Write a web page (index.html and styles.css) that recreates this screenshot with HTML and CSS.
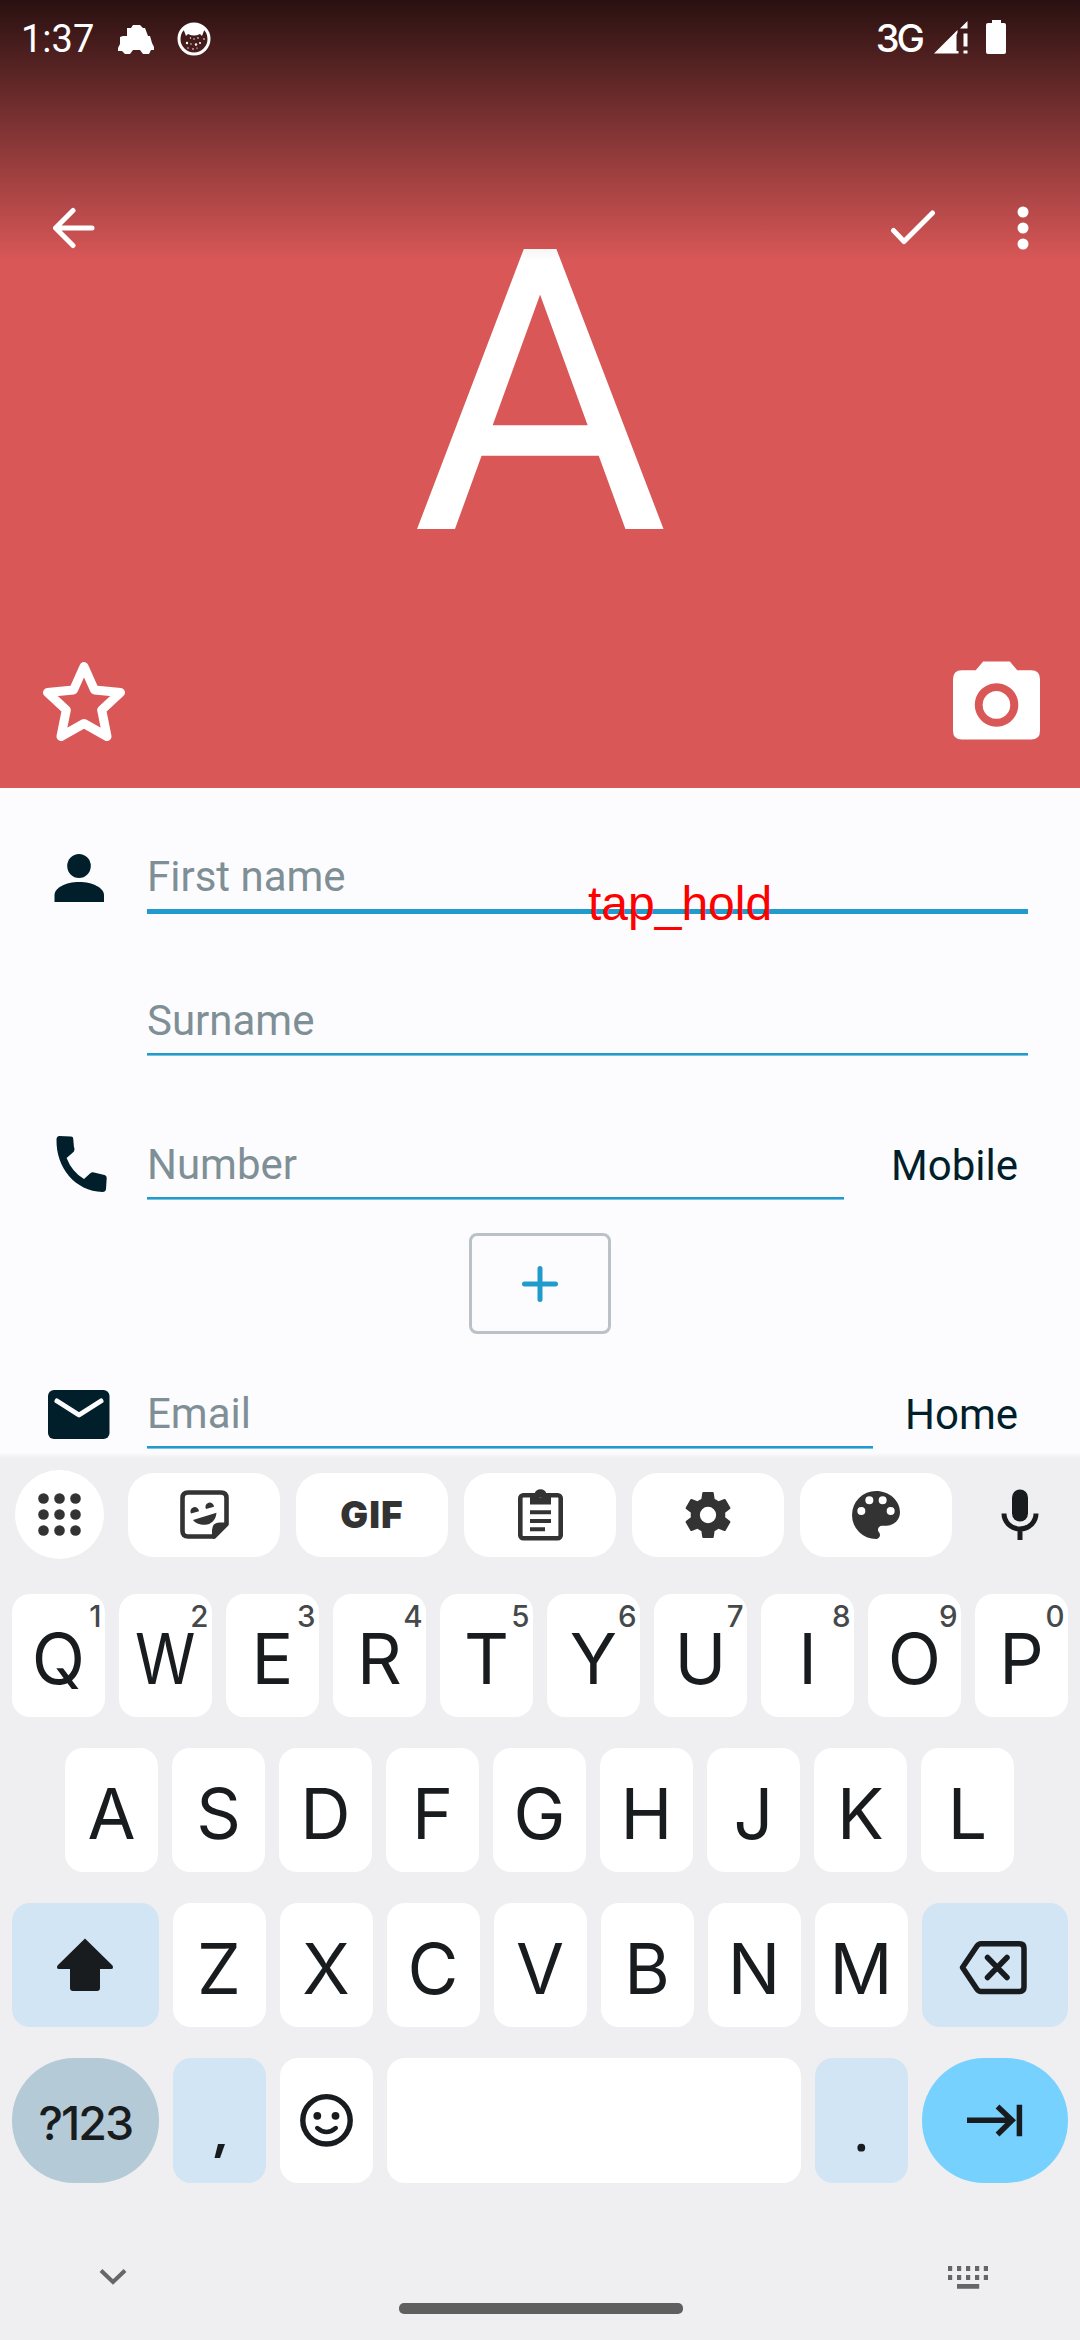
FILE: index.html
```html
<!DOCTYPE html>
<html lang="en">
<head>
<meta charset="utf-8">
<title>New contact</title>
<link rel="stylesheet" href="styles.css">
</head>
<body>
<div class="screen">
  <header class="header">
    <div class="initial">A</div>
    <div class="chrome">
      <div class="status">
        <span class="clock">1:37</span>
        <svg class="car" width="38" height="32" viewBox="0 0 38 32"><path d="M9 5h4l2-3h7l3 3h2l3 8h2l2 7 2 4v3h-3l-2 4h-6l-3-4H15l-3 4H7l-3-3H0v-3l2-4V14l3-1h4z"/></svg>
        <svg class="cat" width="36" height="36" viewBox="0 0 36 36"><circle cx="18" cy="18" r="15" fill="none" stroke="#fff" stroke-width="3"/><path d="M7 7q11-7 22 0l-3 8-2-2q-6 3-12 0l-2 2z"/><g><circle cx="11" cy="22" r="1.200"/><circle cx="20" cy="23.500" r="1.200"/><circle cx="24" cy="22" r="1"/><circle cx="14.500" cy="17" r=".7"/><circle cx="18" cy="18" r=".7"/><circle cx="22" cy="17" r=".8"/><circle cx="15" cy="23" r=".7"/><circle cx="12" cy="27" r=".7"/><circle cx="17" cy="28" r=".8"/><circle cx="21" cy="27" r=".6"/><circle cx="28" cy="18" r=".8"/></g></svg>
        <span class="network">3G</span>
        <svg class="signal" width="34" height="34" viewBox="0 0 34 34"><path d="M0 33.500 23.500 10v2.500l-1 2.500v16h2v2.500zM26 8.500 33.500 1v7.500zM29.500 13.500h4v13h-4zM29.500 30.500h4v3h-4z"/></svg>
        <svg class="battery" width="20" height="34" viewBox="0 0 20 34"><path d="M6 0h9v3h3q2 0 2 2v27q0 2-2 2H2q-2 0-2-2V5q0-2 2-2h4z"/></svg>
      </div>
      <div class="appbar">
        <svg width="42" height="42" viewBox="0 0 42 42"><path class="line" d="M39 21H3M20 3.500 2.500 21 20 38.500"/></svg>
        <svg class="check" width="46" height="42" viewBox="0 0 46 42"><path class="line" d="M3.500 23.500 14 34.500 42.500 6"/></svg>
        <svg class="dots" width="12" height="44" viewBox="0 0 12 44"><circle cx="6" cy="6" r="5.500"/><circle cx="6" cy="22" r="5.500"/><circle cx="6" cy="38" r="5.500"/></svg>
      </div>
      <div class="photo-actions">
        <svg width="82" height="82" viewBox="0 0 82 82"><path fill="none" stroke="#fff" stroke-width="9" stroke-linejoin="round" d="M41 7.500 51.500 31l26 2.500L58.700 51l5.300 26.500L41 64.500l-23 13L23.300 51 4.500 33.500l26-2.500z"/></svg>
        <svg width="87" height="80" viewBox="0 0 88 80"><path fill-rule="evenodd" d="M30.500 0h27l7.500 9h14q9 0 9 9v52q0 9-9 9H9q-9 0-9-9V18q0-9 9-9h14zM44 22a22 22 0 1 0 .1 0zM44 30a14 14 0 1 1-.1 0z"/></svg>
      </div>
    </div>
  </header>

  <main class="form">
    <div class="row row-first">
      <svg class="icon" width="147" height="126" viewBox="0 0 147 126"><ellipse cx="79" cy="78" rx="11.800" ry="12"/><path d="M54.500 114v-7c0-7 11-13 24.700-13S104 100 104 107v7z"/></svg>
      <div class="field focused">First name</div>
    </div>
    <div class="row row-last">
      <div class="icon"></div>
      <div class="field">Surname</div>
    </div>
    <div class="row row-phone">
      <svg class="icon" width="147" height="144" viewBox="0 0 147 144"><path d="M59.500 81 71 81.500q2.200 0 2.200 2l.7 8q1.500 4-1 6l-6.300 5.500Q72 117 84 124l6-5.500q2-1.800 5-.8l9.500 2.300q2.300.7 2.200 3l-.7 11q-.3 3-3.500 3C75 136 56 113 56.500 84.500q0-3.500 3-3.500z"/></svg>
      <div class="field">Number</div>
      <div class="type">Mobile</div>
    </div>
    <div class="add"><svg width="40" height="40" viewBox="0 0 40 40"><path fill="none" stroke="#219bce" stroke-width="5" stroke-linecap="round" d="M4.500 20h31M20 4.500v31"/></svg></div>
    <div class="row row-email">
      <svg class="icon" width="147" height="114" viewBox="0 0 147 114"><rect x="48" y="56" width="61.500" height="49" rx="6"/><path fill="none" stroke="#fcfcff" stroke-width="5" stroke-linecap="round" stroke-linejoin="round" d="M57 67l22 14 22-14"/></svg>
      <div class="field">Email</div>
      <div class="type">Home</div>
    </div>
    <div class="gesture">tap_hold</div>
  </main>

  <section class="keyboard">
    <div class="tools">
      <svg class="apps" width="89" height="89" viewBox="0 0 89 89"><g fill="#333"><circle cx="28.500" cy="28.500" r="5.300"/><circle cx="44.500" cy="28.500" r="5.300"/><circle cx="60.500" cy="28.500" r="5.300"/><circle cx="28.500" cy="44.500" r="5.300"/><circle cx="44.500" cy="44.500" r="5.300"/><circle cx="60.500" cy="44.500" r="5.300"/><circle cx="28.500" cy="60.500" r="5.300"/><circle cx="44.500" cy="60.500" r="5.300"/><circle cx="60.500" cy="60.500" r="5.300"/></g></svg>
      <div class="pill"><svg width="49" height="49" viewBox="0 0 49 49"><path fill="none" stroke="#333" stroke-width="4.600" stroke-linejoin="round" d="M34 46.500H8q-5.500 0-5.500-5.500V8q0-5.500 5.500-5.500h33q5.500 0 5.500 5.500v26z"/><path d="M32 48V40q0-7.500 8-7.500h8V35L34 49z"/><path d="M11 23.500a4.300 4.300 0 1 1 8-2.200zM26 19a4.300 4.300 0 1 1 8-2.200zM13 30l23.500-7.200C36 30 31 34.800 25 34.800S15 33 13 30z"/></svg></div>
      <div class="pill gif">GIF</div>
      <div class="pill"><svg width="45" height="53" viewBox="0 0 45 53"><rect x="2.300" y="7.300" width="40.400" height="42.900" rx="3" fill="none" stroke="#333" stroke-width="4.600"/><path fill-rule="evenodd" d="M12 6h4.500a6.200 6.200 0 0 1 12 0H33v10.500H12zM22.500 5a2.300 2.300 0 1 0 .1 0zM12 22.200h21v4H12zM12 31h21v4H12zM12 39.200h15v4H12z"/></svg></div>
      <div class="pill"><svg width="48" height="48" viewBox="2 2 20 20"><path d="M19.140 12.940c.04-.3.060-.61.060-.94 0-.32-.02-.64-.07-.94l2.030-1.580a.49.490 0 0 0 .12-.61l-1.920-3.320a.49.490 0 0 0-.59-.22l-2.390.96a7.030 7.030 0 0 0-1.620-.94l-.36-2.540a.48.480 0 0 0-.48-.41h-3.840a.48.480 0 0 0-.47.410l-.36 2.540c-.59.240-1.130.57-1.620.94l-2.390-.96a.48.480 0 0 0-.59.220L2.740 8.870a.47.470 0 0 0 .12.610l2.030 1.580c-.05.3-.09.63-.09.94s.02.640.07.940l-2.030 1.580a.49.490 0 0 0-.12.610l1.920 3.320c.12.220.37.290.59.220l2.390-.96c.5.380 1.030.7 1.620.94l.36 2.540c.05.240.24.410.48.410h3.840c.24 0 .44-.17.470-.41l.36-2.540c.59-.24 1.130-.56 1.620-.94l2.390.96c.22.080.47 0 .59-.22l1.920-3.320a.47.470 0 0 0-.12-.61zM12 15.400a3.400 3.400 0 1 1 0-6.800 3.400 3.400 0 0 1 0 6.800z"/></svg></div>
      <div class="pill"><svg width="48" height="48" viewBox="3 3 18 18"><path d="M12 3a9 9 0 0 0 0 18c.83 0 1.500-.67 1.500-1.500 0-.39-.15-.74-.39-1.010-.23-.26-.38-.61-.38-.99 0-.83.670-1.500 1.500-1.500H16c2.760 0 5-2.240 5-5 0-4.420-4.030-8-9-8zm-5.500 9a1.500 1.500 0 1 1 0-3 1.500 1.500 0 0 1 0 3zm3-4a1.500 1.500 0 1 1 0-3 1.500 1.500 0 0 1 0 3zm5 0a1.500 1.500 0 1 1 0-3 1.500 1.500 0 0 1 0 3zm3 4a1.500 1.500 0 1 1 0-3 1.500 1.500 0 0 1 0 3z"/></svg></div>
      <svg class="mic" width="40" height="54" viewBox="0 0 40 54"><rect x="12" y="1.500" width="16" height="32" rx="8"/><path fill="none" stroke="#191c1e" stroke-width="5" d="M4 25.500a16 15.500 0 0 0 32 0M20 41v11"/></svg>
    </div>

    <div class="keys keys-1">
      <div class="key">Q<sup>1</sup></div>
      <div class="key"><span class="tight">W</span><sup>2</sup></div>
      <div class="key">E<sup>3</sup></div>
      <div class="key">R<sup>4</sup></div>
      <div class="key">T<sup>5</sup></div>
      <div class="key">Y<sup>6</sup></div>
      <div class="key">U<sup>7</sup></div>
      <div class="key">I<sup>8</sup></div>
      <div class="key">O<sup>9</sup></div>
      <div class="key">P<sup>0</sup></div>
    </div>
    <div class="keys keys-2">
      <div class="key">A</div>
      <div class="key">S</div>
      <div class="key">D</div>
      <div class="key">F</div>
      <div class="key">G</div>
      <div class="key">H</div>
      <div class="key">J</div>
      <div class="key">K</div>
      <div class="key">L</div>
    </div>
    <div class="keys keys-3">
      <div class="key art wide tint"><svg width="146" height="124" viewBox="0 0 146 124"><path d="M73 35.500 100.500 62.500q1.500 3.500-1.500 3.500H88v19q0 3-3 3H61q-3 0-3-3V66H47q-3 0-1.500-3.500z"/></svg></div>
      <div class="key">Z</div>
      <div class="key">X</div>
      <div class="key">C</div>
      <div class="key">V</div>
      <div class="key">B</div>
      <div class="key">N</div>
      <div class="key">M</div>
      <div class="key art wide tint"><svg width="147" height="124" viewBox="0 0 147 124"><path fill="none" stroke="#191c1e" stroke-width="5.500" stroke-linejoin="round" stroke-linecap="round" d="M41.500 64.500 56 43q1.600-2.300 4-2.300h38.500q4.500 0 4.500 4.500V84q0 4.500-4.500 4.500H60q-2.400 0-4-2.300zM66.500 54.500l19.500 20M86 54.500l-19.500 20"/></svg></div>
    </div>
    <div class="keys keys-4">
      <div class="key wide symbols"><span>?123</span></div>
      <div class="key art tint"><svg width="93" height="125" viewBox="0 0 93 125"><path d="M45 86h7l-5 14h-5.500z"/></svg></div>
      <div class="key art"><svg width="93" height="125" viewBox="0 0 93 125"><circle cx="46.500" cy="62.300" r="23.700" fill="none" stroke="#191c1e" stroke-width="5.400"/><circle cx="37.300" cy="57.800" r="3.900"/><circle cx="55.500" cy="57.800" r="3.900"/><path fill="none" stroke="#191c1e" stroke-width="4.400" stroke-linecap="round" d="M37.200 70q9.300 8 18.600 0"/></svg></div>
      <div class="key space"></div>
      <div class="key art tint"><svg width="93" height="125" viewBox="0 0 93 125"><circle cx="46.300" cy="89.700" r="3.900"/></svg></div>
      <div class="key art wide enter"><svg width="147" height="125" viewBox="0 0 147 125"><path fill="none" stroke="#191c1e" stroke-width="5.500" d="M46 62.300h45M76.500 48.500 91 62.300 76.500 76.500M98.400 46.700v31.600"/></svg></div>
    </div>

    <div class="navigation">
      <svg class="collapse" width="28" height="18" viewBox="0 0 28 18"><path fill="none" stroke="#666" stroke-width="4" d="M2 2.500 14 14 26 2.500"/></svg>
      <div class="handle"></div>
      <svg width="41" height="24" viewBox="0 0 41 24"><path fill="#666" d="M0 0h4.200v5H0zM9 0h4.200v5H9zM18 0h4.200v5H18zM27 0h4.200v5H27zM35.800 0H40v5h-4.200zM0 9h4.200v5H0zM9 9h4.200v5H9zM18 9h4.200v5H18zM27 9h4.200v5H27zM35.800 9H40v5h-4.200zM9 18h22.200v4.800H9z"/></svg>
    </div>
  </section>
</div>
</body>
</html>
```
FILE: styles.css
```css
* { box-sizing: border-box; }
body { margin: 0; font-family: Roboto, sans-serif; }
svg { display: block; flex: none; }
.screen { width: 1080px; height: 2340px; display: flex; flex-direction: column; overflow: hidden; background: #fcfcff; }

/* Header */
.header { display: grid; grid-template: 788px / 1080px; background: #d95757; color: #fff; fill: #fff; }
.initial, .chrome { grid-area: 1 / 1; }
.initial { display: flex; align-items: center; justify-content: center; font-size: 394px; line-height: 460px; }
.chrome { z-index: 1; display: flex; flex-direction: column; background: linear-gradient(rgba(0, 0, 0, .81), rgba(0, 0, 0, 0) 261px); }
.status { height: 78px; display: flex; align-items: center; padding: 0 74px 0 21px; font-size: 38px; }
.clock { width: 97px; }
.car { margin-right: 20px; }
.network { margin-left: auto; margin-right: 12px; font-family: Inter, sans-serif; font-size: 38px; font-weight: 500; letter-spacing: -3px; line-height: 76px; padding-bottom: 2px; }
.signal { margin-right: 18px; margin-bottom: 4px; }
.battery { margin-bottom: 4px; }
.appbar { height: 299px; display: flex; align-items: center; padding: 0 51px 0 53px; }
.check { margin-left: auto; margin-right: 81px; }
.line { fill: none; stroke: #fff; stroke-width: 5; stroke-linecap: round; stroke-linejoin: round; }
.photo-actions { flex: 1; display: flex; justify-content: space-between; align-items: flex-end; padding: 0 40px 47px 43px; }

/* Contact form */
.form { position: relative; flex: none; height: 665px; color: #001f2a; fill: #001f2a; font-size: 42px; line-height: 50px; }
.row { display: flex; align-items: flex-end; }
.row-first { height: 126px; }
.row-last { height: 141px; }
.row-phone { height: 144px; }
.row-email { height: 114px; }
.icon { width: 147px; flex: none; }
.field { width: 881px; padding-bottom: 7px; color: #7f8f96; border-bottom: 2px solid #219bce; box-shadow: 0 1px 0 #79c2e1; }
.focused { border-bottom-width: 5px; box-shadow: none; }
.row-phone .field { width: 697px; }
.row-email .field { width: 726px; }
.type { margin: 0 62px 8px auto; }
.add { width: 142px; height: 101px; margin: 34px 0 0 468.500px; display: flex; align-items: center; justify-content: center; border: 3px solid #bac1c7; border-radius: 8px; }
.gesture { position: absolute; left: 588px; top: 88px; color: #f00; font: 48px/56px "Liberation Sans", Arial, sans-serif; }

/* Keyboard */
.keyboard { flex: 1; background: linear-gradient(#fcfcff, #efeff1 5px); padding: 17px 12px 0; color: #191c1e; fill: #191c1e; }
.tools { height: 89px; display: flex; align-items: center; gap: 16px; padding: 0 28px 0 3px; }
.apps { background: #fff; border-radius: 50%; margin-right: 8px; }
.pill { width: 152px; height: 84px; flex: none; display: flex; align-items: center; justify-content: center; background: #fff; border-radius: 26px; fill: #333; color: #333; }
.gif { font: 900 37px/44px Inter, sans-serif; letter-spacing: 1px; }
.mic { margin-left: auto; fill: #191c1e; }
.keys { display: flex; gap: 14px; font: 69.700px/84px Inter, sans-serif; }
.keys-1 { height: 123px; margin-top: 35px; }
.keys-2 { height: 124px; margin-top: 31px; padding-left: 53px; }
.keys-3 { height: 124px; margin-top: 31px; }
.keys-4 { height: 125px; margin-top: 31px; }
.key { position: relative; width: 93px; flex: none; display: flex; align-items: center; justify-content: center; padding-top: 7px; background: #fff; border-radius: 18px; }
.key sup { position: absolute; right: 4px; top: 7px; font-size: 29.500px; font-weight: 500; line-height: 30px; letter-spacing: -.5px; color: #46494b; }
.art { padding: 0; }
.wide { width: 146.500px; }
.space { width: 414px; }
.tint { background: #d2e5f4; }
.tight { transform: scaleX(.88); }
.symbols { padding: 4px 0 0; border-radius: 62px; background: #b4cad6; font-size: 46.500px; font-weight: 500; letter-spacing: -2px; }
.enter { border-radius: 62px; background: #76d1ff; }
.navigation { display: flex; justify-content: space-between; padding: 83px 79px 0 87px; }
.collapse { margin-top: 2px; }
.handle { width: 284px; height: 11px; margin: 37px 0 0 7px; border-radius: 5px; background: #5f5f5f; }
```
